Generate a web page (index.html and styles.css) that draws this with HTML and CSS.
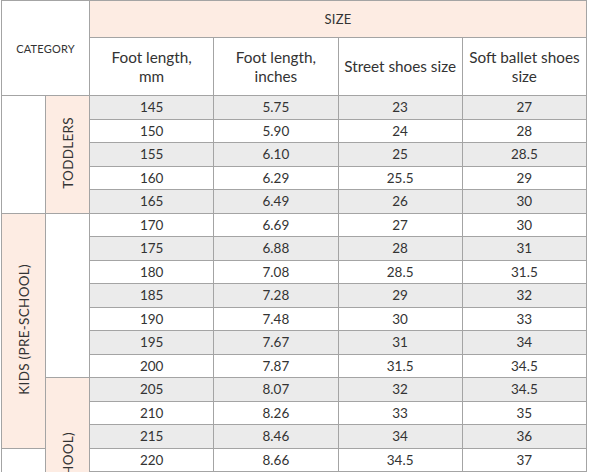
FILE: index.html
```html
<!DOCTYPE html>
<html>
<head>
	<title>Size chart</title>
	<meta charset="UTF-8">
	<link rel="stylesheet" href="styles.css">
</head>
<body>
	<table class="size_table">
		<colgroup>
			<col class="cat_col">
			<col class="cat_col">
			<col>
			<col>
			<col>
			<col>
		</colgroup>
		<tr class="head_top">
			<th colspan="2" rowspan="2" class="category">CATEGORY</th>
			<th colspan="4" class="size_head">SIZE</th>
		</tr>
		<tr class="head_sub">
			<th>Foot length,<br>mm</th>
			<th>Foot length,<br>inches</th>
			<th>Street shoes size</th>
			<th>Soft ballet shoes<br>size</th>
		</tr>
		<tr class="odd">
			<td rowspan="5" class="blank"></td>
			<td rowspan="5" class="label"><span>TODDLERS</span></td>
			<td>145</td><td>5.75</td><td>23</td><td>27</td>
		</tr>
		<tr><td>150</td><td>5.90</td><td>24</td><td>28</td></tr>
		<tr class="odd"><td>155</td><td>6.10</td><td>25</td><td>28.5</td></tr>
		<tr><td>160</td><td>6.29</td><td>25.5</td><td>29</td></tr>
		<tr class="odd"><td>165</td><td>6.49</td><td>26</td><td>30</td></tr>
		<tr>
			<td rowspan="10" class="label"><span>KIDS (PRE-SCHOOL)</span></td>
			<td rowspan="7" class="blank"></td>
			<td>170</td><td>6.69</td><td>27</td><td>30</td>
		</tr>
		<tr class="odd"><td>175</td><td>6.88</td><td>28</td><td>31</td></tr>
		<tr><td>180</td><td>7.08</td><td>28.5</td><td>31.5</td></tr>
		<tr class="odd"><td>185</td><td>7.28</td><td>29</td><td>32</td></tr>
		<tr><td>190</td><td>7.48</td><td>30</td><td>33</td></tr>
		<tr class="odd"><td>195</td><td>7.67</td><td>31</td><td>34</td></tr>
		<tr><td>200</td><td>7.87</td><td>31.5</td><td>34.5</td></tr>
		<tr class="odd">
			<td rowspan="9" class="label"><span>KIDS (SCHOOL)</span></td>
			<td>205</td><td>8.07</td><td>32</td><td>34.5</td>
		</tr>
		<tr><td>210</td><td>8.26</td><td>33</td><td>35</td></tr>
		<tr class="odd"><td>215</td><td>8.46</td><td>34</td><td>36</td></tr>
		<tr>
			<td rowspan="6" class="blank"></td>
			<td>220</td><td>8.66</td><td>34.5</td><td>37</td>
		</tr>
		<tr class="odd"><td></td><td></td><td></td><td></td></tr>
		<tr><td></td><td></td><td></td><td></td></tr>
		<tr class="odd"><td></td><td></td><td></td><td></td></tr>
		<tr><td></td><td></td><td></td><td></td></tr>
		<tr class="odd"><td></td><td></td><td></td><td></td></tr>
	</table>
</body>
</html>
```

FILE: styles.css
```css
body {
	margin: 0;
	background-color: white;
	font-family: Lato, "Open Sans", sans-serif;
	color: #333333;
}

.size_table {
	border-collapse: collapse;
	table-layout: fixed;
	width: 586px;
	margin-left: 1px;
}

.cat_col {
	width: 44px;
}

.size_table th,
.size_table td {
	border: 1px solid #a4a4a4;
	padding: 0;
	text-align: center;
	font-weight: normal;
}

.size_table td {
	height: 22.5px;
	font-size: 13.5px;
	line-height: 16px;
}

.size_table tr.odd td {
	background-color: #ebebeb;
}

.head_top th {
	height: 36px;
}

.category {
	font-size: 11px;
	letter-spacing: 0.2px;
	background-color: white;
}

.size_head {
	background-color: #fdece3;
	font-size: 13px;
	letter-spacing: 0.3px;
}

.head_sub th {
	height: 57px;
	font-size: 15.3px;
	line-height: 19px;
}

.size_table td.blank,
.size_table tr.odd td.blank {
	background-color: white;
}

.size_table td.label,
.size_table tr.odd td.label {
	background-color: #fdece3;
	font-size: 13.5px;
	letter-spacing: 0.3px;
}

.label span {
	display: inline-block;
	writing-mode: vertical-rl;
	transform: rotate(180deg);
	white-space: nowrap;
}
```
